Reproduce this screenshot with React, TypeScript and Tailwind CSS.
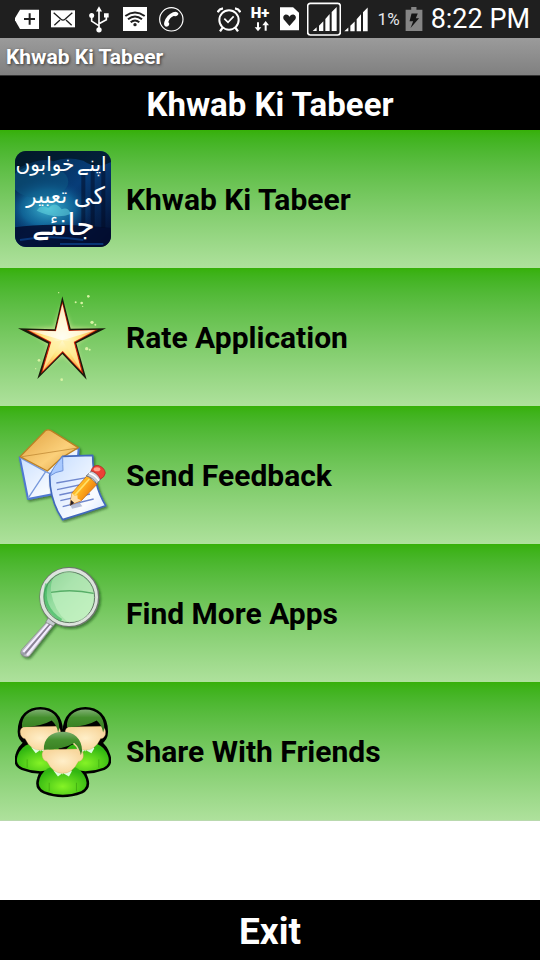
import type { ReactNode } from "react";

function StatusBar() {
  return (
    <div className="flex h-[38px] items-center justify-between bg-[#1f1f1f] pl-[15px] pr-[10px] text-white">
      <div className="flex items-center gap-3">
        {/* Backspace with plus */}
        <svg viewBox="45 23 72 72" className="h-6 w-6" fill="none">
          <path d="M43 59 L60 31 H120 V89 H60 Z" fill="#fff" />
          <path d="M72 59 H105 M89 42 V76" stroke="#1f1f1f" strokeWidth="6" />
        </svg>
        {/* Mail */}
        <svg viewBox="153 21 72 72" className="h-6 w-6" fill="none">
          <path d="M153 31 H225 V82 H153 Z" fill="#fff" />
          <path d="M161 38 L183 58 Q189 63 195 58 L217 38 M163 76 L180 60 M215 76 L198 60" stroke="#1f1f1f" strokeWidth="4" />
        </svg>
        {/* USB */}
        <svg viewBox="261 17 72 80" className="h-[27px] w-6" fill="none">
          <path d="M297 88 V28 M297 76 L275 62 V46 M297 70 L319 58 V46" stroke="#fff" strokeWidth="5" />
          <path d="M297 17 L306 33 H288 Z M312 38 H326 V51 H312 Z" fill="#fff" />
          <circle cx="275" cy="45" r="7.500" fill="#fff" />
          <circle cx="297" cy="88" r="8" fill="#fff" />
        </svg>
        {/* Wifi */}
        <svg viewBox="369 21 72 72" className="h-6 w-6" fill="none">
          <path d="M369 21 H441 V93 H369 Z" fill="#fff" />
          <path d="M376 48 Q405 27 434 48 M384 58 Q405 41 426 58 M392 67 Q405 56 418 67" stroke="#1f1f1f" strokeWidth="6" />
          <circle cx="405" cy="74" r="5" fill="#1f1f1f" />
        </svg>
        {/* Phone */}
        <svg viewBox="477 21 75 75" className="h-[25px] w-[25px]" fill="none">
          <circle cx="514" cy="58" r="35" stroke="#fff" strokeWidth="3.500" />
          <path d="M519 37 Q530 32 535 40 Q536 46 527 49 L521 48 Q509 53 505 66 L508 71 Q507 80 498 80 Q490 77 493 66 Q499 46 519 37 Z" fill="#fff" />
        </svg>
      </div>

      <div className="flex items-center gap-2">
        {/* Alarm */}
        <svg viewBox="48 22 72 75" className="h-[25px] w-6" fill="none" stroke="#fff">
          <circle cx="84" cy="61" r="29" strokeWidth="6" />
          <path d="M70 57 L81 68 L98 50" strokeWidth="5" />
          <path d="M50 38 Q54 28 66 26 M118 38 Q114 28 102 26" strokeWidth="7" />
          <path d="M65 84 L57 95 M103 84 L111 95" strokeWidth="7" />
        </svg>
        {/* Mobile data */}
        <svg viewBox="147 3 69 105" className="h-[35px] w-[23px]" fill="#fff">
          <text x="152" y="52" fontSize="45" fontWeight="900" className="font-[Roboto,sans-serif]">H+</text>
          <path d="M171 64 H177 V79 H184 L174 91 L164 79 H171 Z M194 89 H200 V73 H207 L197 60 L187 73 H194 Z" />
        </svg>
        {/* Health card */}
        <svg viewBox="237 21 58 72" className="h-6 w-[19px]">
          <path d="M237 21 H277 L295 38 V91 H237 Z" fill="#fff" />
          <path d="M266 78 L248 58 Q244 46 254 43 Q262 42 266 50 Q270 42 278 43 Q289 47 284 58 Z" fill="#1f1f1f" />
        </svg>
        <div className="mr-[2px] flex items-center gap-[3px]">
          <svg viewBox="322 4 102 102" className="h-[34px] w-[34px]" fill="#fff">
            <rect x="324" y="8" width="98" height="95" rx="8" fill="none" stroke="#fff" strokeWidth="5" />
            <path d="M339 91 L351 80 V91 Z M358 91 V75 L371 62 V91 Z M377 91 V55 L390 40 V91 Z M396 91 V34 L411 19 V91 Z" />
          </svg>
          <svg viewBox="432 19 72 74" className="h-[25px] w-6" fill="#fff">
            <path d="M433 91 L445 80 V91 Z M451 91 V75 L464 62 V91 Z M470 91 V55 L483 40 V91 Z M489 91 V34 L503 20 V91 Z" />
          </svg>
        </div>
        <div className="flex items-center gap-[5px]">
          <span className="text-[17px] leading-none text-gray-200">1%</span>
          {/* Battery */}
          <svg viewBox="134 18 53 73" className="h-6 w-[18px]">
            <path d="M135 26 H152 V18 H168 V26 H186 V91 H135 Z" fill="#858585" />
            <path d="M153 38 H172 L166 52 H176 L150 82 L158 61 H147 Z" fill="#151515" />
          </svg>
        </div>
        <span className="text-[27px] leading-none">8:22 PM</span>
      </div>
    </div>
  );
}

function AppLogo() {
  return (
    <svg viewBox="45 33 288 288" className="h-24 w-24 shrink-0" role="img" aria-label="Khwab Ki Tabeer">
      <defs>
        <linearGradient id="night" x1="0" y1="0" x2="1" y2="1">
          <stop offset="0" stopColor="#03263f" />
          <stop offset="0.500" stopColor="#073d79" />
          <stop offset="1" stopColor="#020a28" />
        </linearGradient>
        <radialGradient id="glow">
          <stop offset="0" stopColor="#3fb4cf" />
          <stop offset="0.600" stopColor="#1476a8" stopOpacity="0.700" />
          <stop offset="1" stopColor="#0a3a70" stopOpacity="0" />
        </radialGradient>
        <clipPath id="tile">
          <rect x="45" y="33" width="288" height="288" rx="34" />
        </clipPath>
      </defs>
      <g clipPath="url(#tile)">
        <rect x="45" y="33" width="288" height="288" fill="url(#night)" />
        <ellipse cx="145" cy="205" rx="135" ry="90" fill="url(#glow)" />
        <ellipse cx="120" cy="125" rx="85" ry="50" fill="#0d5c86" opacity="0.500" />
        <path d="M45 33 H333 V66 Q290 90 250 62 Q200 48 160 64 Q120 50 45 90 Z" fill="#021420" opacity="0.700" />
        <path d="M110 212 Q125 190 145 205 Q165 180 185 208 Q205 200 212 222 Q170 240 110 212 Z" fill="#6adbe4" opacity="0.500" />
        <path d="M45 262 Q150 246 333 264 V321 H45 Z" fill="#020d30" opacity="0.850" />
        <path d="M60 300 Q150 284 250 300 M180 312 H310" stroke="#0d4fa0" strokeWidth="6" fill="none" opacity="0.600" />
        <path d="M278 70 V262 M310 60 V264 M250 100 V256" stroke="#020b22" strokeWidth="12" opacity="0.500" />
      </g>
      <g fill="#fff" textAnchor="middle" direction="rtl" className="font-['DejaVu_Sans',sans-serif] font-normal">
        <text x="276" y="92" fontSize="60">اپنے</text>
        <text x="135" y="92" fontSize="60">خوابوں</text>
        <text x="268" y="192" fontSize="72">کی</text>
        <text x="140" y="188" fontSize="64">تعبیر</text>
        <text x="190" y="284" fontSize="90">جانئے</text>
      </g>
    </svg>
  );
}

function StarIcon() {
  return (
    <svg viewBox="45 27 288 288" className="h-24 w-24 shrink-0" aria-hidden="true">
      <defs>
        <radialGradient id="gold" cx="0.500" cy="0.500" r="0.550">
          <stop offset="0" stopColor="#fffbd8" />
          <stop offset="0.500" stopColor="#ffe782" />
          <stop offset="1" stopColor="#ff9b35" />
        </radialGradient>
        <filter id="halo" x="-20%" y="-20%" width="140%" height="140%">
          <feGaussianBlur stdDeviation="6" />
        </filter>
      </defs>
      <path d="M187 85 L211 145 L282 150 L225 190 L239 260 L187 222 L134 260 L148 190 L92 150 L164 145 Z" fill="#fff4b0" opacity="0.500" stroke="#fff4b0" strokeWidth="8" filter="url(#halo)" />
      <path d="M187 49 L212 146 L318 145 L229 190 L260 299 L187 222 L112 297 L145 191 L54 145 L164 148 Z" fill="#191b0b" />
      <path d="M187 65 L209 151 L294 149 L225 187 L250 282 L188 217 L123 281 L149 187 L80 150 L166 152 Z" fill="#cf220b" />
      <path d="M187 72 L206 153 L286 151 L221 186 L244 273 L188 213 L128 274 L154 186 L86 151 L168 154 Z" fill="url(#gold)" />
      <path d="M187 72 L206 153 L187 181 L168 154 Z M286 151 L206 153 L187 181 Z M86 151 L168 154 L187 181 Z" fill="#fff" opacity="0.650" />
      <path d="M187 181 L221 186 L244 273 Z M187 181 L154 186 L128 274 Z" fill="#fff0a4" opacity="0.650" />
      <g fill="#d8f3a4">
        <circle cx="265" cy="49" r="4" />
        <circle cx="227" cy="67" r="3" />
        <circle cx="245" cy="69" r="4" />
        <circle cx="248" cy="79" r="2" />
        <circle cx="276" cy="127" r="5" />
        <circle cx="286" cy="134" r="3" />
        <circle cx="260" cy="206" r="5" />
        <circle cx="269" cy="209" r="3" />
        <circle cx="117" cy="241" r="4" />
        <circle cx="107" cy="266" r="2" />
        <circle cx="185" cy="299" r="4" />
        <circle cx="176" cy="38" r="2" />
      </g>
    </svg>
  );
}

function FeedbackIcon() {
  return (
    <svg viewBox="45 36 288 288" className="h-24 w-24 shrink-0" aria-hidden="true">
      <defs>
        <linearGradient id="flap" x1="0" y1="0" x2="1" y2="1">
          <stop offset="0" stopColor="#e0a040" />
          <stop offset="0.600" stopColor="#fbd07a" />
          <stop offset="1" stopColor="#dc9b3a" />
        </linearGradient>
        <linearGradient id="paper" x1="0" y1="0" x2="1" y2="1">
          <stop offset="0" stopColor="#c4dcff" />
          <stop offset="0.700" stopColor="#fafcff" />
          <stop offset="1" stopColor="#d5e4ff" />
        </linearGradient>
        <linearGradient id="pencil" x1="0" y1="0" x2="1" y2="0.700">
          <stop offset="0" stopColor="#ffe24a" />
          <stop offset="0.500" stopColor="#ffb01e" />
          <stop offset="1" stopColor="#e56a08" />
        </linearGradient>
        <filter id="shade" x="-20%" y="-20%" width="150%" height="150%">
          <feDropShadow dx="4" dy="5" stdDeviation="3" floodColor="#123a10" floodOpacity="0.600" />
        </filter>
      </defs>
      <g filter="url(#shade)" strokeLinejoin="round">
        <path d="M59 126 L236 100 L226 224 L84 252 Z" fill="url(#paper)" stroke="#4f79d2" strokeWidth="6" />
        <path d="M84 250 L137 170 M60 128 L137 170 L155 178" stroke="#7799dc" strokeWidth="4" fill="none" />
        <path d="M60 125 L136 47 Q144 42 153 47 L235 98 L184 129 L142 168 Z" fill="url(#flap)" stroke="#bc8124" strokeWidth="4" />
        <path d="M66 125 L233 99" stroke="#b77e2a" strokeWidth="2" />
      </g>
      <g filter="url(#shade)" strokeLinejoin="round">
        <path d="M188 124 L278 121 Q279 210 317 272 Q252 294 188 314 Q149 258 149 181 Z" fill="url(#paper)" stroke="#4169bc" strokeWidth="5" />
        <path d="M150 183 Q158 156 188 125 Q188 151 189 167 Q166 170 150 183 Z" fill="#a9caff" stroke="#6f95dc" strokeWidth="3" />
      </g>
      <path d="M169 204 L260 188 M171 224 L252 207 M178 240 L263 222 M181 257 L270 237 M188 275 L281 252" stroke="#6f87cd" strokeWidth="4" />
      <path d="M211 269 L237 260 L247 274 L216 281 Z" fill="#9aa6c8" opacity="0.700" />
      <path d="M210 270 L216 234 L262 181 L291 208 L244 257 Z" fill="url(#pencil)" stroke="#b76113" strokeWidth="2" />
      <path d="M210 270 L216 234 L225 243 L232 240 L233 251 L244 256 Z" fill="#ffdfa6" />
      <path d="M210 272 L213 255 L223 264 Z" fill="#292024" />
      <path d="M224 241 L268 192" stroke="#ffe16a" strokeWidth="5" />
      <path d="M259 183 L276 166 Q294 173 304 190 L290 207 Q280 188 259 183 Z" fill="#c8ced6" stroke="#69727c" strokeWidth="3" />
      <path d="M267 174 Q289 182 297 198" stroke="#fff" strokeWidth="4" fill="none" />
      <path d="M273 168 Q278 151 294 151 Q314 157 316 174 Q313 188 301 192 Q292 173 273 168 Z" fill="#ed4136" stroke="#a92620" strokeWidth="2" />
      <ellipse cx="291" cy="163" rx="10" ry="6" fill="#ffa18c" />
    </svg>
  );
}

function SearchIcon() {
  return (
    <svg viewBox="45 30 288 288" className="h-24 w-24 shrink-0" aria-hidden="true">
      <defs>
        <linearGradient id="metal" x1="0" y1="0" x2="1" y2="1">
          <stop offset="0" stopColor="#777c7e" />
          <stop offset="0.300" stopColor="#f7f8fa" />
          <stop offset="0.500" stopColor="#9298a1" />
          <stop offset="0.650" stopColor="#fff" />
          <stop offset="1" stopColor="#626570" />
        </linearGradient>
        <linearGradient id="lens" x1="0" y1="0" x2="1" y2="1">
          <stop offset="0" stopColor="#50b96a" />
          <stop offset="0.400" stopColor="#95dda0" />
          <stop offset="1" stopColor="#c7f0bd" />
        </linearGradient>
        <filter id="cast" x="-20%" y="-20%" width="150%" height="150%">
          <feDropShadow dx="5" dy="6" stdDeviation="3" floodColor="#174711" floodOpacity="0.600" />
        </filter>
      </defs>
      <g filter="url(#cast)">
        <path d="M142 199 L162 209 L88 303 Q75 310 63 297 Q61 290 65 284 Z" fill="url(#metal)" stroke="#858087" strokeWidth="2" />
        <path d="M145 205 L70 291 M154 210 L81 300" stroke="#f5edff" strokeWidth="6" />
        <path d="M150 207 L76 295" stroke="#8d7e97" strokeWidth="4" />
        <path d="M145 188 L137 202 L160 213 L169 200 Z" fill="#c6ccd0" stroke="#777" strokeWidth="2" />
        <circle cx="208" cy="126" r="84" fill="none" stroke="#6f7570" strokeWidth="12" />
      </g>
      <circle cx="207" cy="126" r="82" fill="url(#lens)" stroke="#dce3dc" strokeWidth="10" />
      <circle cx="208" cy="127" r="76" fill="none" stroke="#637866" strokeWidth="3" />
      <path d="M160 70 Q205 30 254 70 Q279 91 280 115 Q216 99 153 111 Q151 85 160 70 Z" fill="#bdeaba" opacity="0.550" />
      <path d="M153 112 Q216 101 280 116 Q284 165 247 194 Q228 203 201 199 Q164 171 153 112 Z" fill="#c6f2c4" opacity="0.650" />
      <path d="M153 112 Q216 101 281 115" stroke="#58ae68" strokeWidth="4" fill="none" />
      <path d="M140 86 Q121 157 184 196" stroke="#36b45a" strokeWidth="9" fill="none" opacity="0.600" />
    </svg>
  );
}

function Friend() {
  return (
    <>
      <path d="M-35 45 Q-63 54 -74 84 Q-83 112 -58 123 Q0 146 59 123 Q83 111 74 84 Q63 55 37 45 Z" fill="url(#shirt)" />
      <path d="M-43 96 V123 M44 96 V123" stroke="#2b8b08" strokeWidth="3" opacity="0.500" />
      <path d="M-21 44 L0 70 L22 44 L29 60 L20 76 L0 65 L-15 76 L-29 58 Z" fill="#e1ffe0" />
      <path d="M-56 -10 Q-70 -2 -64 16 Q-58 28 -50 28 Q-32 66 0 66 Q32 66 50 28 Q60 28 65 16 Q69 -2 56 -12 Z" fill="url(#skin)" stroke="#c99a55" strokeWidth="1" />
      <path d="M-60 -9 C-62 -45 -36 -67 0 -67 C36 -67 62 -45 62 -6 L58 8 Q54 -16 37 -31 Q2 -10 -60 -9 Z" fill="url(#hair)" />
    </>
  );
}

function FriendsIcon() {
  const outline =
    "M-45 42 Q-66 56 -74 84 Q-83 112 -58 123 Q0 146 59 123 Q83 111 74 84 Q65 56 45 42 Q66 30 66 6 C66 -45 36 -67 0 -67 C-36 -67 -66 -45 -66 6 Q-66 30 -45 42 Z";
  return (
    <svg viewBox="45 24 288 288" className="h-24 w-24 shrink-0" aria-hidden="true">
      <defs>
        <radialGradient id="shirt" cx="0.500" cy="0.700" r="0.600">
          <stop offset="0" stopColor="#85f326" />
          <stop offset="1" stopColor="#31b611" />
        </radialGradient>
        <radialGradient id="skin">
          <stop offset="0" stopColor="#ffefc9" />
          <stop offset="1" stopColor="#f8d79e" />
        </radialGradient>
        <linearGradient id="hair" x1="0" y1="0" x2="0" y2="1">
          <stop offset="0" stopColor="#7fb072" />
          <stop offset="0.350" stopColor="#45902e" />
          <stop offset="1" stopColor="#34791d" />
        </linearGradient>
      </defs>
      <g stroke="#000" strokeWidth="16" strokeLinejoin="round">
        <path d={outline} transform="translate(121 105) scale(0.92)" />
        <path d={outline} transform="translate(256 105) scale(0.92)" />
        <path d={outline} transform="translate(188 173) scale(0.94)" />
      </g>
      <g transform="translate(121 105) scale(0.92)">
        <Friend />
      </g>
      <g transform="translate(256 105) scale(0.92)">
        <Friend />
      </g>
      <g transform="translate(188 173) scale(0.94)">
        <Friend />
      </g>
    </svg>
  );
}

function MenuRow({ icon, label }: { icon: ReactNode; label: string }) {
  return (
    <li>
      <button
        type="button"
        className="flex h-[138px] w-full items-center gap-[15px] bg-linear-to-b from-[#36b007] to-[#aee19c] px-[15px] text-left text-[30px] font-bold leading-9 text-black"
      >
        {icon}
        <span className="pt-[2px]">{label}</span>
      </button>
    </li>
  );
}

export default function App() {
  return (
    <main className="flex min-h-screen flex-col bg-white font-[Roboto,sans-serif]">
      <StatusBar />
      <div className="flex h-[38px] items-center border-b border-[#333] bg-linear-to-b from-[#9b9b9b] to-[#808080] px-[6px] pt-[3px] text-[21px] font-bold text-white text-shadow-[1px_1px_3px_#333]">
        Khwab Ki Tabeer
      </div>
      <h1 className="bg-black pb-[5px] pt-[9px] text-center text-[33px] font-bold leading-10 text-white">
        Khwab Ki Tabeer
      </h1>
      <ul className="border-b border-[#b9d9ae]">
        <MenuRow icon={<AppLogo />} label="Khwab Ki Tabeer" />
        <MenuRow icon={<StarIcon />} label="Rate Application" />
        <MenuRow icon={<FeedbackIcon />} label="Send Feedback" />
        <MenuRow icon={<SearchIcon />} label="Find More Apps" />
        <MenuRow icon={<FriendsIcon />} label="Share With Friends" />
      </ul>
      <button
        type="button"
        className="mt-auto h-[60px] w-full bg-black pt-[3px] text-[37px] font-bold leading-10 text-white"
      >
        Exit
      </button>
    </main>
  );
}
